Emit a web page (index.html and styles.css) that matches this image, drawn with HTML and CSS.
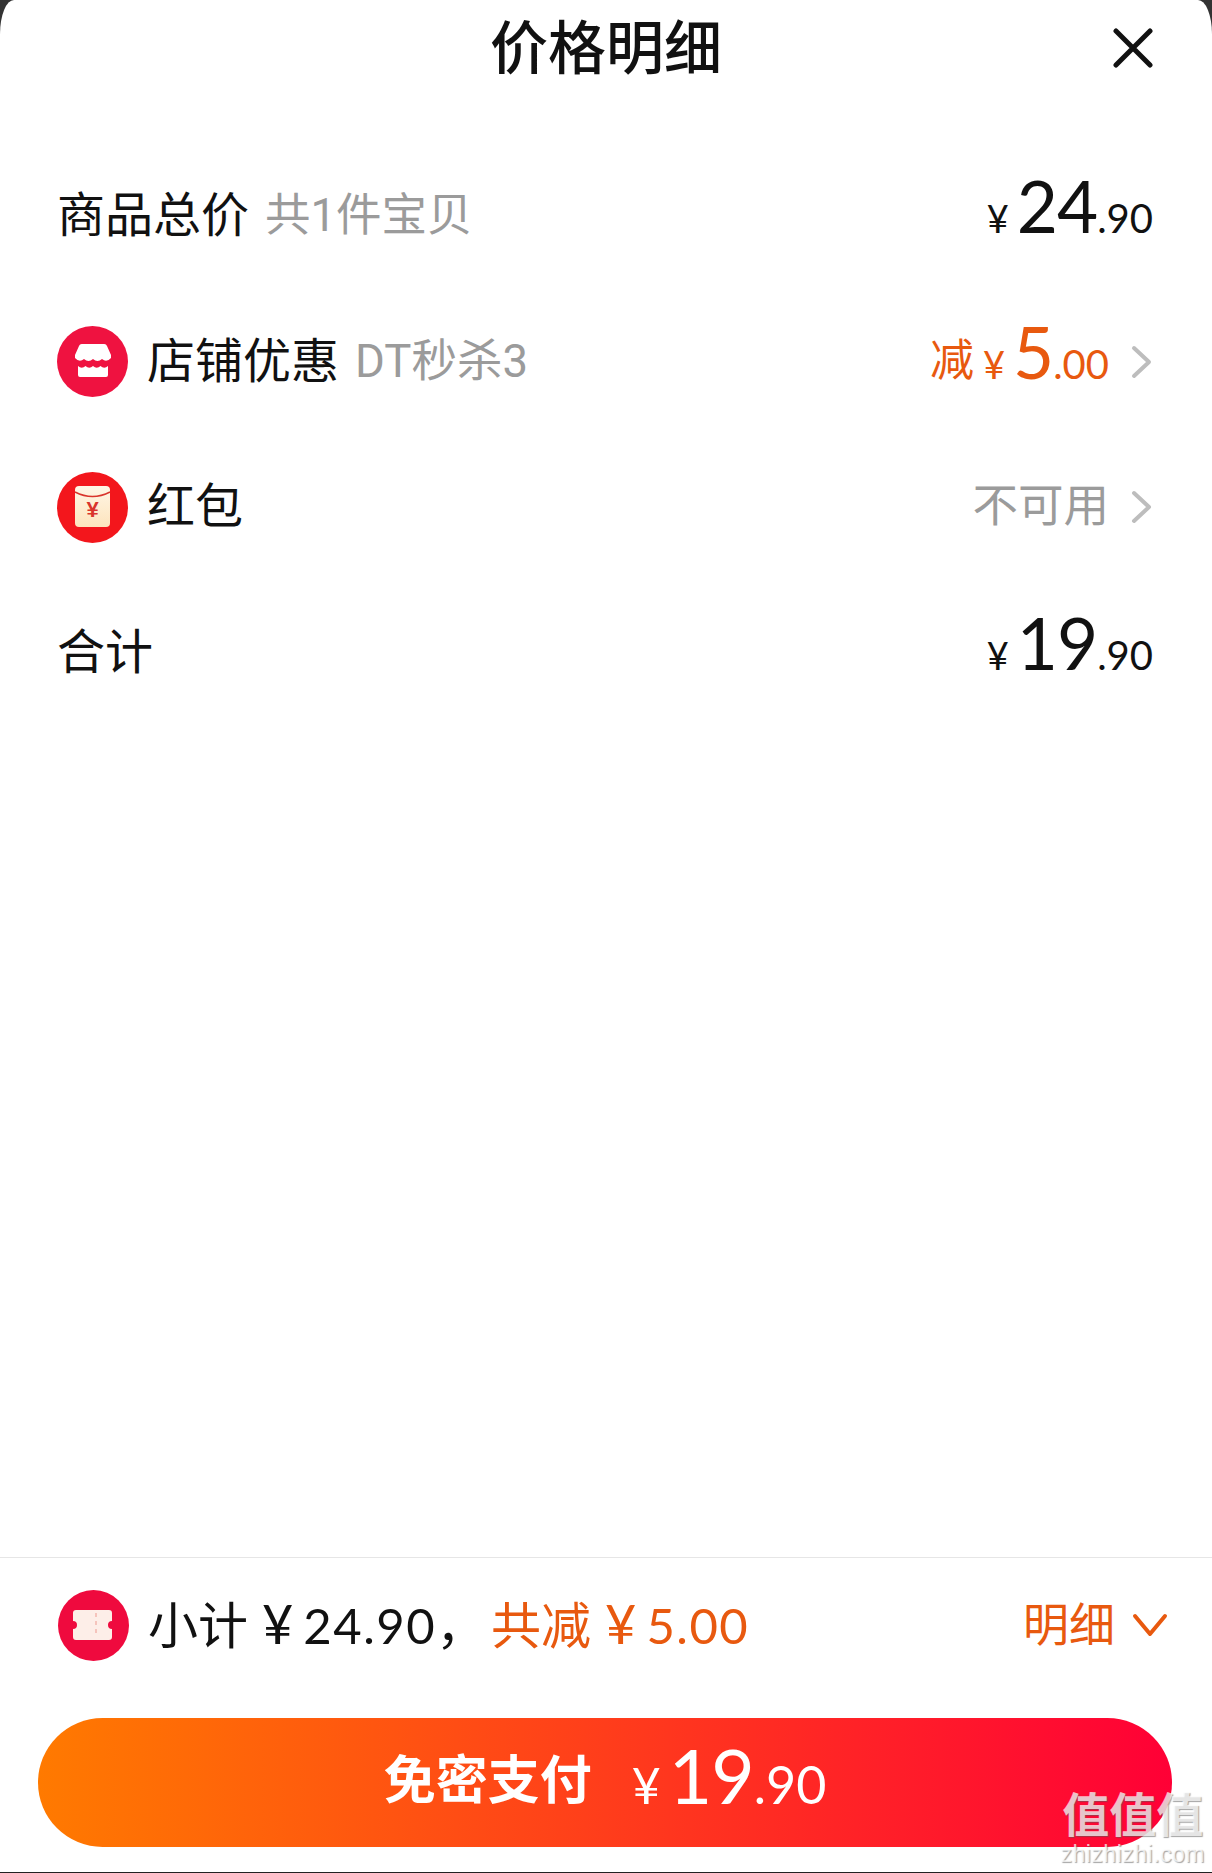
FILE: index.html
```html
<!DOCTYPE html>
<html>
<head>
  <title>价格明细</title>
  <link rel="stylesheet" href="styles.css">
</head>
<body>
  <div class="sheet">
    <header class="sheet-header">
      <span></span>
      <h1>价格明细</h1>
      <svg class="close" width="40" height="40" viewBox="0 0 40 40"><path d="M3 3l34 34M37 3L3 37"/></svg>
    </header>

    <div class="rows">
      <div class="row">
        <div class="row-left">
          <span class="label">商品总价</span><span class="sub">共1件宝贝</span>
        </div>
        <div class="price">
          <span class="yen">¥</span><span class="big">24</span><span class="small">.90</span>
        </div>
      </div>

      <div class="row">
        <div class="row-left">
          <svg class="icon" width="71" height="71" viewBox="0 0 71 71">
            <circle cx="35.5" cy="35.5" r="35.5" fill="#ef1240"/>
            <path fill="#fff" d="M25 18H47a3 3 0 0 1 3 2l4 9v3q-4.500 5-9 1q-4.500 4-9 0q-4.500 4-9 0q-4.500 4-9-1v-3l4-9a3 3 0 0 1 3-2z"/>
            <path fill="#fff" d="M21 40q3.750 3.500 7.500 0q3.750 3.500 7.500 0q3.750 3.500 7.500 0q3.750 3.500 7.500 0V49a2 2 0 0 1-2 2H23a2 2 0 0 1-2-2z"/>
          </svg>
          <span class="label">店铺优惠</span><span class="sub">DT秒杀3</span>
        </div>
        <div class="row-right orange">
          <div class="price">
            <span class="prefix">减</span><span class="yen">¥</span><span class="big">5</span><span class="small">.00</span>
          </div>
          <svg class="chevron" width="22" height="34" viewBox="0 0 22 34"><path d="M3 3l15 14L3 31"/></svg>
        </div>
      </div>

      <div class="row">
        <div class="row-left">
          <svg class="icon" width="71" height="71" viewBox="0 0 71 71">
            <defs>
              <linearGradient id="paper" x1="0" y1="0" x2="0" y2="1">
                <stop offset="0" stop-color="#fff6e6"/>
                <stop offset="1" stop-color="#fde4bd"/>
              </linearGradient>
            </defs>
            <circle cx="35.500" cy="35.500" r="35.500" fill="#f3161c"/>
            <rect x="18" y="14" width="35" height="41" rx="4" fill="url(#paper)"/>
            <path d="M18 20q17.500 9 35 0" fill="none" stroke="#d9342b" stroke-width="1.500"/>
            <text class="packet-yen" x="35.500" y="45" text-anchor="middle">¥</text>
          </svg>
          <span class="label">红包</span>
        </div>
        <div class="row-right">
          <span class="sub none">不可用</span>
          <svg class="chevron" width="22" height="34" viewBox="0 0 22 34"><path d="M3 3l15 14L3 31"/></svg>
        </div>
      </div>

      <div class="row">
        <div class="row-left">
          <span class="label">合计</span>
        </div>
        <div class="price">
          <span class="yen">¥</span><span class="big">19</span><span class="small">.90</span>
        </div>
      </div>
    </div>

    <footer class="sheet-footer">
      <div class="summary">
        <div class="summary-left">
          <svg class="icon" width="71" height="71" viewBox="0 0 71 71">
            <circle cx="35.500" cy="35.500" r="35.500" fill="#ef0a3e"/>
            <path fill="#fdeee8" d="M18 20H51a3 3 0 0 1 3 3v8a4 4 0 0 0 0 8v8a3 3 0 0 1-3 3H18a3 3 0 0 1-3-3v-8a4 4 0 0 0 0-8v-8a3 3 0 0 1 3-3z"/>
            <path d="M38 23v24" stroke="#f5c4bc" stroke-width="2" stroke-dasharray="4 4"/>
          </svg>
          <span class="summary-text">小计<span class="num yen-gap">¥</span><span class="num">24.90</span>，</span>
          <span class="summary-text orange">共减<span class="num yen-gap">¥</span><span class="num">5.00</span></span>
        </div>
        <div class="detail orange">
          <span>明细</span>
          <svg class="chevron-down" width="36" height="24" viewBox="0 0 36 24"><path d="M3 3l15 18L33 3"/></svg>
        </div>
      </div>
      <button class="pay">
        <span class="pay-label">免密支付</span>
        <span class="price">
          <span class="yen">¥</span><span class="big">19</span><span class="small">.90</span>
        </span>
      </button>
    </footer>

    <div class="watermark">
      <div class="wm-logo">值值值</div>
      <div class="wm-url">zhizhizhi.com</div>
    </div>
  </div>
</body>
</html>
```

FILE: styles.css
```css
html, body {
  margin: 0;
  background-color: #333;
}

body {
  font-family: Roboto, "Noto Sans CJK SC", sans-serif;
  color: #111;
}

.sheet {
  position: relative;
  display: flex;
  flex-direction: column;
  height: 1872px;
  overflow: hidden;
  background-color: #fff;
  border-radius: 14px 14px 0 0 / 34px 34px 0 0;
  border-bottom: 1px solid #222;
}

/* Header */
.sheet-header {
  display: grid;
  grid-template-columns: 1fr auto 1fr;
  align-items: center;
  height: 96px;
  padding: 0 59px;
  flex-shrink: 0;
}
.sheet-header h1 {
  margin: 0;
  padding-top: 2px;
  font-size: 58px;
  font-weight: 500;
  line-height: 94px;
  color: #111;
}
.close {
  justify-self: end;
}
.close path {
  fill: none;
  stroke: #111;
  stroke-width: 5;
  stroke-linecap: round;
}

/* Rows */
.rows {
  padding-top: 47.500px;
}
.row {
  display: flex;
  justify-content: space-between;
  align-items: center;
  height: 145.500px;
  padding: 0 59px 0 57px;
}
.row-left, .row-right {
  display: flex;
  align-items: center;
}
.icon {
  flex-shrink: 0;
  margin-right: 19px;
}
.label {
  font-size: 48px;
  line-height: 60px;
}
.sub {
  margin-left: 16px;
  font-size: 45.500px;
  line-height: 60px;
  color: #9b9b9b;
}
.sub.none {
  margin-left: 0;
}

/* Prices */
.price {
  display: inline-flex;
  align-items: baseline;
  margin-bottom: 20px;
  font-family: Lato, "Noto Sans CJK SC", sans-serif;
}
.prefix {
  margin-right: 9px;
  font-family: "Noto Sans CJK SC", sans-serif;
  font-size: 44px;
  transform: translateY(-3px);
}
.yen {
  margin-right: 8px;
  font-size: 38px;
}
.big {
  font-size: 71px;
  line-height: 80px;
  letter-spacing: -1px;
}
.small {
  font-size: 40px;
}
.orange {
  color: #e8590f;
}
.chevron {
  margin-left: 22px;
}
.chevron path {
  fill: none;
  stroke: #bdbdbd;
  stroke-width: 4;
  stroke-linecap: round;
  stroke-linejoin: round;
}

/* Footer */
.sheet-footer {
  margin-top: auto;
  border-top: 1px solid #e6e6e6;
  padding: 0 40px 25px 38px;
}
.summary {
  display: flex;
  justify-content: space-between;
  align-items: center;
  height: 134px;
  margin-bottom: 26px;
  padding-left: 20px;
  padding-right: 4px;
}
.summary-left {
  display: flex;
  align-items: center;
}
.summary-text {
  font-size: 50px;
  line-height: 60px;
}
.summary-text.orange {
  margin-left: 5px;
}
.num {
  font-family: Lato, sans-serif;
  font-size: 49px;
  letter-spacing: 1.500px;
}
.yen-gap {
  margin: 0 10px 0 14px;
  font-size: 54px;
  letter-spacing: 0;
}
.detail {
  display: flex;
  align-items: center;
  font-size: 46px;
}
.detail span {
  margin-bottom: 8px;
}
.chevron-down {
  margin-left: 17px;
}
.chevron-down path {
  fill: none;
  stroke: #e8590f;
  stroke-width: 4;
  stroke-linecap: round;
  stroke-linejoin: round;
}

/* Pay button */
.pay {
  display: flex;
  justify-content: center;
  align-items: center;
  gap: 40px;
  width: 100%;
  height: 129px;
  padding: 0;
  border: none;
  border-radius: 65px;
  background: linear-gradient(90deg, #ff7a00, #ff0036);
  color: #fff;
  font-family: inherit;
}
.pay-label {
  margin-bottom: 12px;
  font-size: 52px;
  font-weight: 700;
}
.pay .price {
  margin-bottom: 16px;
}
.pay .yen {
  font-size: 50px;
}
.pay .big {
  font-size: 75px;
}
.pay .small {
  font-size: 52px;
}

/* Watermark over the corner */
.watermark {
  position: absolute;
  right: 7px;
  bottom: 6px;
  text-align: center;
  color: rgba(255, 255, 255, 0.72);
  text-shadow: 1px 1px 1px rgba(90, 90, 90, 0.55);
}
.wm-logo {
  font-size: 47px;
  font-weight: 700;
  line-height: 52px;
}
.wm-url {
  font-family: "Liberation Sans", sans-serif;
  font-size: 23px;
  line-height: 24px;
  letter-spacing: 0.5px;
}

.packet-yen {
  font-family: "Liberation Sans", sans-serif;
  font-size: 22px;
  font-weight: 700;
  fill: #d9342b;
}
```
